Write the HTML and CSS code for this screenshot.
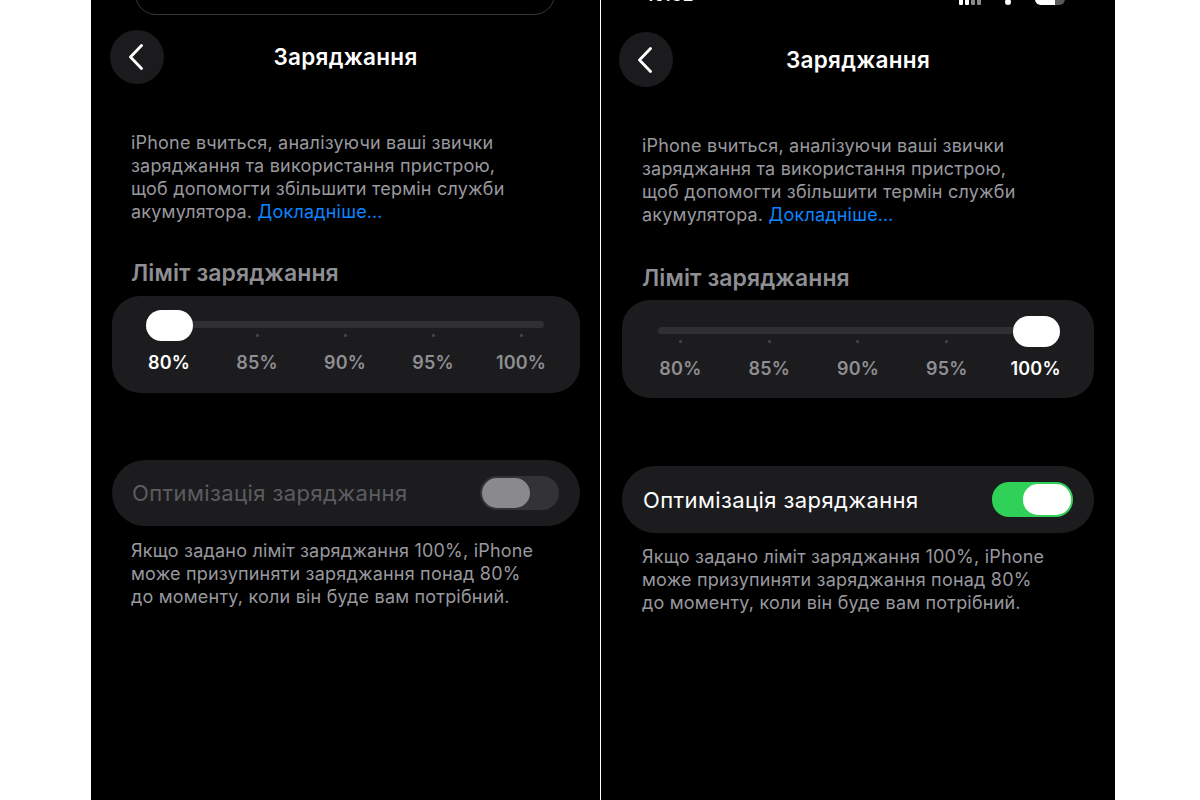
FILE: index.html
```html
<!DOCTYPE html>
<html lang="uk">
<head>
<meta charset="utf-8">
<title>Заряджання</title>
<link rel="stylesheet" href="styles.css">
</head>
<body>
<div class="stage">

  <section class="phone phone--left">
    <div class="search-edge"></div>
    <header class="nav">
      <button class="back" aria-label="Назад">
        <svg width="16" height="26" viewBox="0 0 16 26"><path d="M13.5 1.5 L2.5 13 L13.5 24.5" fill="none" stroke="#fff" stroke-width="2.8" stroke-linecap="round" stroke-linejoin="round"/></svg>
      </button>
      <h1 class="nav-title">Заряджання</h1>
      <span></span>
    </header>
    <p class="intro">iPhone вчиться, аналізуючи ваші звички<br>заряджання та використання пристрою,<br>щоб допомогти збільшити термін служби<br>акумулятора. <a class="more" href="#">Докладніше…</a></p>
    <h2 class="group-title">Ліміт заряджання</h2>
    <div class="card slider">
      <div class="rail">
        <div class="track"></div>
        <div class="thumb thumb--start"></div>
      </div>
      <div class="ticks"><span></span><span></span><span></span><span></span><span></span></div>
      <div class="stops">
        <span class="on">80%</span><span>85%</span><span>90%</span><span>95%</span><span>100%</span>
      </div>
    </div>
    <div class="card toggle-row is-disabled">
      <span class="toggle-label">Оптимізація заряджання</span>
      <span class="switch"><span class="knob"></span></span>
    </div>
    <p class="footnote">Якщо задано ліміт заряджання 100%, iPhone<br>може призупиняти заряджання понад 80%<br>до моменту, коли він буде вам потрібний.</p>
  </section>

  <section class="phone phone--right">
    <div class="status">
      <span class="clock">10:32</span>
      <span class="status-icons">
        <span class="bars"><i></i><i></i><i></i><i></i></span>
        <span class="wifi"></span>
        <span class="battery"><span class="battery-fill"></span></span>
      </span>
    </div>
    <header class="nav">
      <button class="back" aria-label="Назад">
        <svg width="16" height="26" viewBox="0 0 16 26"><path d="M13.5 1.5 L2.5 13 L13.5 24.5" fill="none" stroke="#fff" stroke-width="2.8" stroke-linecap="round" stroke-linejoin="round"/></svg>
      </button>
      <h1 class="nav-title">Заряджання</h1>
      <span></span>
    </header>
    <p class="intro">iPhone вчиться, аналізуючи ваші звички<br>заряджання та використання пристрою,<br>щоб допомогти збільшити термін служби<br>акумулятора. <a class="more" href="#">Докладніше…</a></p>
    <h2 class="group-title">Ліміт заряджання</h2>
    <div class="card slider">
      <div class="rail">
        <div class="track"></div>
        <div class="thumb thumb--end"></div>
      </div>
      <div class="ticks"><span></span><span></span><span></span><span></span><span></span></div>
      <div class="stops">
        <span>80%</span><span>85%</span><span>90%</span><span>95%</span><span class="on">100%</span>
      </div>
    </div>
    <div class="card toggle-row">
      <span class="toggle-label">Оптимізація заряджання</span>
      <span class="switch is-on"><span class="knob"></span></span>
    </div>
    <p class="footnote">Якщо задано ліміт заряджання 100%, iPhone<br>може призупиняти заряджання понад 80%<br>до моменту, коли він буде вам потрібний.</p>
  </section>

</div>
</body>
</html>
```

FILE: styles.css
```css
* { box-sizing: border-box; }

html, body {
  margin: 0;
  padding: 0;
  background: #ffffff;
}

body {
  font-family: "Inter", "Noto Sans", sans-serif;
  -webkit-font-smoothing: antialiased;
}

.stage {
  display: flex;
  gap: 1px;
  padding-left: 91px;
  height: 800px;
  overflow: hidden;
}

.phone {
  background: #000;
  height: 800px;
  overflow: hidden;
  display: flex;
  flex-direction: column;
  align-items: flex-start;
}

.phone--left { width: 509px; }
.phone--right { width: 514px; }

/* search field edge peeking at the top of the left screen */
.search-edge {
  width: 420px;
  height: 42px;
  margin: -27px 0 0 44px;
  border: 1.5px solid #38383a;
  border-radius: 26px;
  flex: none;
}

/* status bar, mostly scrolled off the top */
.status {
  width: 100%;
  height: 22px;
  margin-top: -17px;
  display: flex;
  align-items: flex-end;
  justify-content: space-between;
  padding: 0 50px 0 45px;
  flex: none;
}

.clock {
  color: #fff;
  font-size: 17px;
  font-weight: 600;
  line-height: 20px;
  letter-spacing: 0.5px;
}

.status-icons {
  display: flex;
  align-items: flex-end;
  gap: 10px;
  height: 22px;
}

.bars {
  display: flex;
  align-items: flex-end;
  gap: 2px;
  height: 22px;
}
.bars i {
  display: block;
  width: 4px;
  background: #fff;
  border-radius: 1px;
}
.bars i:nth-child(1) { height: 8px; }
.bars i:nth-child(2) { height: 12px; }
.bars i:nth-child(3) { height: 16px; background: #8a8a8a; }
.bars i:nth-child(4) { height: 20px; background: #8a8a8a; }

.wifi {
  width: 6px;
  height: 6px;
  border-radius: 3px;
  background: #fff;
  margin: 0 14px;
}

.battery {
  width: 30px;
  height: 22px;
  border-radius: 6px;
  background: #5a5a5a;
  overflow: hidden;
  display: flex;
}
.battery-fill {
  width: 20px;
  background: #fff;
}

/* navigation bar */
.nav {
  width: 100%;
  display: grid;
  grid-template-columns: 54px 1fr 54px;
  align-items: center;
  padding: 0 19px;
  margin-top: 15px;
  flex: none;
}

.phone--right .nav {
  margin-top: 27px;
  padding: 0 18px;
}

.back {
  width: 54px;
  height: 54px;
  border-radius: 50%;
  border: none;
  background: #1b1b1d;
  display: flex;
  align-items: center;
  justify-content: center;
  padding: 0 3px 0 0;
  cursor: pointer;
}

.phone--right .back {
  height: 55px;
}

.nav-title {
  margin: 0;
  text-align: center;
  color: #fff;
  font-size: 22.5px;
  font-weight: 600;
  line-height: 26px;
  letter-spacing: 0.3px;
}

/* body copy */
.intro,
.footnote {
  margin: 0;
  padding-left: 40px;
  color: #98989e;
  font-size: 18px;
  line-height: 23px;
  letter-spacing: 0.2px;
}

.intro { margin-top: 46.5px; }

.phone--right .intro,
.phone--right .footnote {
  padding-left: 41px;
}

.more {
  color: #0a84ff;
  text-decoration: none;
}

.group-title {
  margin: 37.5px 0 0;
  padding-left: 40px;
  color: #8e8e93;
  font-size: 23px;
  font-weight: 600;
  line-height: 26px;
  letter-spacing: 0.1px;
}

.phone--right .group-title {
  margin-top: 39.5px;
  padding-left: 41px;
}

/* grouped cards */
.card {
  background: #1c1c1e;
  margin-left: 21px;
  width: 468px;
  flex: none;
}

.phone--right .card { width: 472px; }

.slider {
  margin-top: 10px;
  border-radius: 28px;
  padding: 25px 15px 19px 13px;
}

.phone--right .slider {
  margin-top: 9px;
  padding: 27px 14px 18px 14px;
}

.rail {
  position: relative;
  margin: 0 21px 0 22px;
}

.track {
  height: 7px;
  border-radius: 4px;
  background: #303032;
}

.thumb {
  position: absolute;
  top: -11px;
  width: 47px;
  height: 31px;
  border-radius: 16px;
  background: #fff;
  z-index: 1;
}
.thumb--start { left: -1px; }
.thumb--end { right: -1px; }

.ticks,
.stops {
  display: grid;
  grid-template-columns: repeat(5, 1fr);
  justify-items: center;
}

.ticks {
  margin-top: 6px;
  height: 3px;
}
.ticks span {
  width: 3px;
  height: 3px;
  border-radius: 50%;
  background: #48484a;
}

.stops {
  margin-top: 15px;
  font-size: 18px;
  font-weight: 600;
  line-height: 22px;
  color: #8e8e93;
  letter-spacing: 0.2px;
}
.stops .on { color: #fff; }

.toggle-row {
  margin-top: 67px;
  height: 66px;
  border-radius: 33px;
  padding: 0 21px 0 20px;
  display: flex;
  align-items: center;
  justify-content: space-between;
}

.phone--right .toggle-row {
  margin-top: 68px;
  height: 67px;
  padding: 0 21px 0 21px;
}

.toggle-label {
  color: #fff;
  font-size: 22px;
  line-height: 26px;
  letter-spacing: 0.4px;
}

.is-disabled .toggle-label { color: #5c5c60; }

.switch {
  width: 79px;
  height: 34px;
  border-radius: 17px;
  background: #333336;
  padding: 2px;
  display: flex;
}

.knob {
  width: 48px;
  height: 30px;
  border-radius: 15px;
  background: #8a8a8c;
}

.switch.is-on {
  width: 81px;
  height: 35px;
  background: #30d158;
  justify-content: flex-end;
}
.switch.is-on .knob {
  height: 31px;
  background: #fff;
}

.footnote { margin-top: 12.5px; }
.phone--right .footnote { margin-top: 11.5px; }
```
